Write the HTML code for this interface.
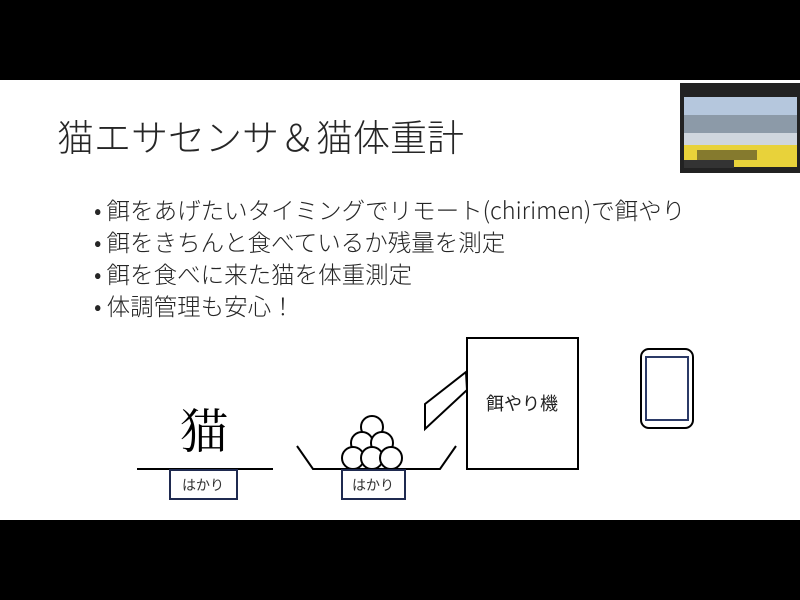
<!DOCTYPE html>
<html><head><meta charset="utf-8"><style>
body{margin:0;width:800px;height:600px;background:#000;position:relative;overflow:hidden;font-family:"Noto Sans CJK JP",sans-serif;}
.slide{position:absolute;left:0;top:80px;width:800px;height:440px;background:#fff;}
.t{position:absolute;white-space:nowrap;color:#262626;}
</style></head><body>
<div class="slide"></div>
<div class="t" style="left:57px;top:108px;font-size:37px;font-weight:300;">猫エサセンサ＆猫体重計</div>
<div class="t" style="left:94px;top:193px;font-size:23.5px;line-height:32px;font-weight:300;">
• 餌をあげたいタイミングでリモート(chirimen)で餌やり<br>
• 餌をきちんと食べているか残量を測定<br>
• 餌を食べに来た猫を体重測定<br>
• 体調管理も安心！</div>
<svg width="800" height="600" style="position:absolute;left:0;top:0">
<g stroke="#000" stroke-width="2" fill="none">
<line x1="137" y1="469" x2="273" y2="469"/>
<polyline points="297,446 313,469 440,469 456,446"/>
<rect x="467" y="338" width="111" height="131"/>
<polygon points="425,404 466,372 467,390 425,429"/>
<g fill="#fff"><circle cx="372" cy="427" r="11"/><circle cx="362" cy="443" r="11"/><circle cx="382" cy="443" r="11"/><circle cx="353" cy="458" r="11"/><circle cx="372" cy="458" r="11"/><circle cx="391" cy="458" r="11"/></g>
<rect x="641" y="349" width="52" height="79" rx="8"/>
</g>
<rect x="646" y="357" width="42" height="63" fill="none" stroke="#2b3a67" stroke-width="2"/>
<rect x="170" y="470" width="67" height="29" fill="#fff" stroke="#1f2a50" stroke-width="2"/>
<rect x="342" y="470" width="63" height="29" fill="#fff" stroke="#1f2a50" stroke-width="2"/>
<text x="203" y="490" font-size="14" text-anchor="middle" fill="#333" font-family="Noto Sans CJK JP">はかり</text>
<text x="373" y="490" font-size="14" text-anchor="middle" fill="#333" font-family="Noto Sans CJK JP">はかり</text>
<text x="204" y="448" font-size="48" text-anchor="middle" fill="#000" font-family="Noto Serif CJK SC">猫</text>
<text x="522" y="410" font-size="18" text-anchor="middle" fill="#222" font-family="Noto Sans CJK JP">餌やり機</text>
<rect x="680" y="83" width="120" height="90" fill="#222"/>
<rect x="684" y="97" width="113" height="70" fill="#cfd6de"/>
<rect x="684" y="97" width="113" height="18" fill="#b5c7dd"/>
<rect x="684" y="115" width="113" height="18" fill="#8c9aa8"/>
<rect x="684" y="145" width="113" height="22" fill="#e8d23a"/>
<rect x="697" y="150" width="60" height="10" fill="#222" opacity=".5"/>
<rect x="684" y="160" width="50" height="8" fill="#333"/>
</svg>
</body></html>
